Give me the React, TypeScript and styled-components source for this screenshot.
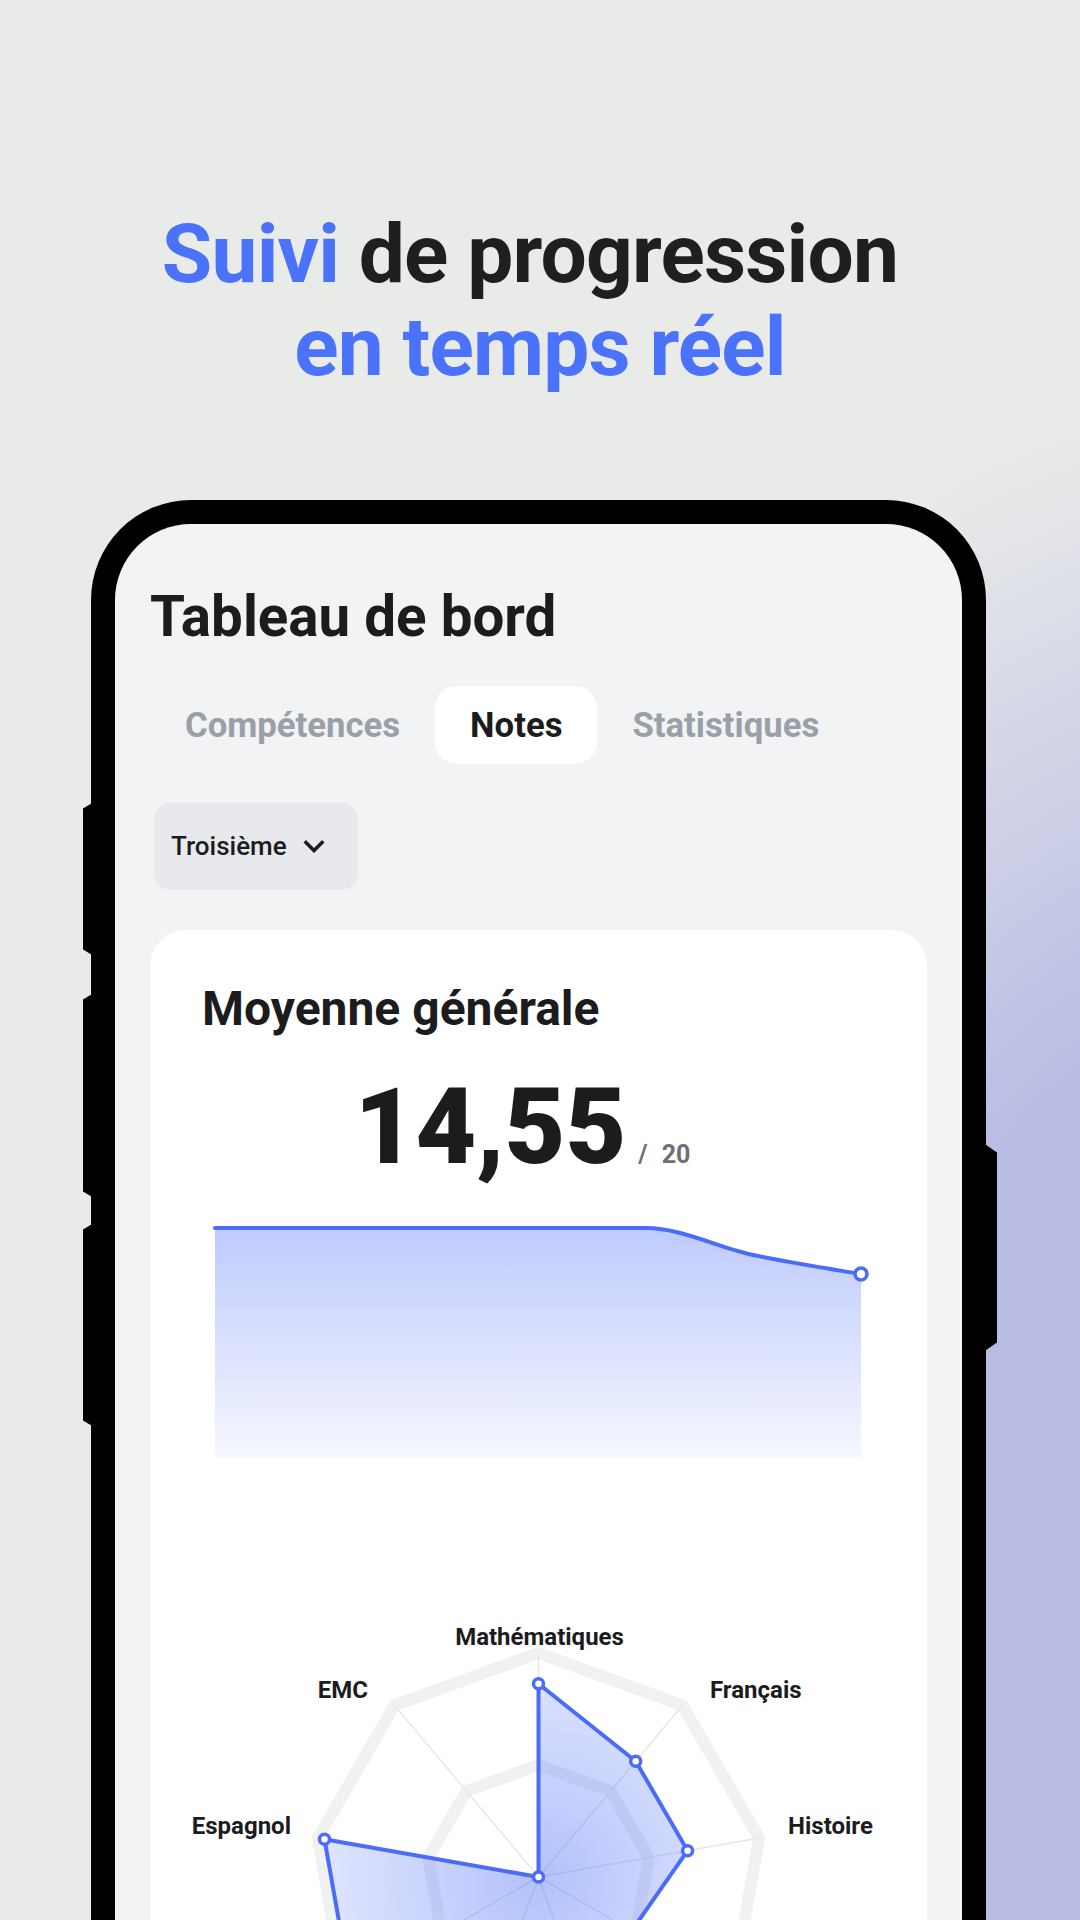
import React from "react";
import styled, { createGlobalStyle } from "styled-components";

const GlobalStyle = createGlobalStyle`
  html, body { margin: 0; padding: 0; }
  body {
    width: 1080px;
    height: 1920px;
    overflow: hidden;
    font-family: Roboto, "Noto Sans", "Liberation Sans", sans-serif;
    -webkit-font-smoothing: antialiased;
  }
  #root { width: 1080px; height: 1920px; }
`;

const Page = styled.div`
  box-sizing: border-box;
  width: 1080px;
  height: 1920px;
  overflow: hidden;
  padding-top: 207.5px;
  display: flex;
  flex-direction: column;
  background-color: #e9ebe9;
  background-image: radial-gradient(
    ellipse 950px 1350px at 1250px 1550px,
    #b7bbe3 0%,
    #b9bde4 40%,
    rgba(233, 235, 233, 0) 85%
  );
  & > * { flex-shrink: 0; }
`;

const Hero = styled.h1`
  margin: 0;
  font-family: Roboto, "Noto Sans", sans-serif;
  font-weight: 700;
  font-size: 82px;
  line-height: 93px;
  letter-spacing: -0.8px;
  color: #1f1f1f;
  text-align: center;
`;

const HeroLine = styled.span<{ $trail?: boolean }>`
  display: block;
  padding-right: ${(p) => (p.$trail ? "20px" : "0")};
`;

const Accent = styled.span`
  color: #4a72fa;
`;

const PhoneWrap = styled.div`
  position: relative;
  margin-top: 106px;
  margin-left: 91px;
  width: 895px;
`;

const Frame = styled.div`
  box-sizing: border-box;
  width: 100%;
  height: 1500px;
  border: 24px solid #000;
  border-bottom: none;
  border-radius: 100px 100px 0 0;
  background: #f2f3f5;
  overflow: hidden;
  padding: 65px 35px 0;
  display: flex;
  flex-direction: column;
  align-items: flex-start;
  & > * { flex-shrink: 0; }
`;

const SideButton = styled.div<{ $side: "left" | "right"; $top: number; $height: number }>`
  position: absolute;
  top: ${(p) => p.$top}px;
  height: ${(p) => p.$height}px;
  background: #000;
  ${(p) =>
    p.$side === "left"
      ? `left: -8px; width: 10px; clip-path: polygon(100% 0, 0 6px, 0 calc(100% - 6px), 100% 100%);`
      : `right: -11px; width: 13px; clip-path: polygon(0 0, 100% 9px, 100% calc(100% - 9px), 0 100%);`}
`;

const ScreenTitle = styled.h2`
  margin: 0;
  font-size: 56.5px;
  line-height: 57px;
  font-weight: 700;
  color: #1c1c1e;
`;

const Tabs = styled.div`
  display: flex;
  margin-top: 40px;
`;

const Tab = styled.div<{ $active?: boolean }>`
  padding: 18px 35px;
  font-size: 34.7px;
  line-height: 42px;
  font-weight: 700;
  border-radius: 22px;
  color: ${(p) => (p.$active ? "#1c1c1e" : "#9aa0a8")};
  background: ${(p) => (p.$active ? "#ffffff" : "transparent")};
`;

const Dropdown = styled.div`
  box-sizing: border-box;
  margin-top: 39px;
  margin-left: 4px;
  height: 87px;
  padding: 0 23px 0 17px;
  display: flex;
  align-items: center;
  gap: 6px;
  background: #e8e9ec;
  border-radius: 16px;
  font-size: 26px;
  font-weight: 500;
  color: #1c1c1e;
`;

const Card = styled.div`
  box-sizing: border-box;
  align-self: stretch;
  margin-top: 40px;
  flex: 1 0 auto;
  background: #ffffff;
  border-radius: 36px 36px 0 0;
  padding-top: 50px;
  display: flex;
  flex-direction: column;
  & > * { flex-shrink: 0; }
`;

const CardTitle = styled.h3`
  margin: 0;
  padding-left: 52px;
  font-size: 48px;
  line-height: 58px;
  font-weight: 700;
  color: #1c1c1e;
`;

const ScoreRow = styled.div`
  margin-top: 38px;
  display: flex;
  justify-content: center;
  align-items: baseline;
  gap: 12px;
  padding-right: 32px;
`;

const BigScore = styled.span`
  font-size: 105px;
  line-height: 104px;
  font-weight: 900;
  color: #1c1c1e;
`;

const ScoreMax = styled.span`
  font-size: 25px;
  font-weight: 700;
  word-spacing: 8px;
  color: #6e6e73;
`;

const ChartSvg = styled.svg`
  display: block;
  margin-top: 21px;
`;

const RadarSvg = styled.svg`
  display: block;
  margin-top: 30px;
`;

const AxisLabel = styled.text`
  font-family: Roboto, "Noto Sans", sans-serif;
  font-size: 24px;
  font-weight: 700;
  fill: #1c1c1e;
`;

const BLUE = "#4a6cf7";

const Chevron = () => (
  <svg width="42" height="42" viewBox="0 0 24 24" aria-hidden="true">
    <path d="M7.41 8.59 12 13.17l4.59-4.58L18 10l-6 6-6-6 1.41-1.41z" fill="#1c1c1e" />
  </svg>
);

const LineChart = () => {
  const line =
    "M65,27 L495.7,27 C531.6,27 567.4,46.3 603.3,54 C639.2,61.7 675.1,67.1 711,73";
  return (
    <ChartSvg width={777} height={270} viewBox="0 0 777 270">
      <defs>
        <linearGradient id="areaFill" x1="0" y1="27" x2="0" y2="257" gradientUnits="userSpaceOnUse">
          <stop offset="0" stopColor={BLUE} stopOpacity="0.36" />
          <stop offset="1" stopColor={BLUE} stopOpacity="0.05" />
        </linearGradient>
      </defs>
      <path d={`${line} L711,257 L65,257 Z`} fill="url(#areaFill)" />
      <path d={line} fill="none" stroke={BLUE} strokeWidth="4" strokeLinecap="round" />
      <circle cx="711" cy="73" r="6" fill="#fff" stroke={BLUE} strokeWidth="3.5" />
    </ChartSvg>
  );
};

const CX = 388.5;
const CY = 376;
const R = 224;
const AXES = 9;
const values = [0.863, 0.675, 0.676, 0.48, 0.55, 0.55, 0.97, 0.97, 0];

const pt = (i: number, r: number) => {
  const a = (i * 2 * Math.PI) / AXES;
  return [CX + r * Math.sin(a), CY - r * Math.cos(a)];
};

const ring = (r: number) =>
  Array.from({ length: AXES }, (_, i) => pt(i, r).map((v) => v.toFixed(1)).join(",")).join(" ");

const labels: { text: string; x: number; y: number; anchor: "start" | "middle" | "end" }[] = [
  { text: "Mathématiques", x: 389.5, y: 144, anchor: "middle" },
  { text: "Français", x: 560, y: 197, anchor: "start" },
  { text: "Histoire", x: 638, y: 333, anchor: "start" },
  { text: "Espagnol", x: 141, y: 333, anchor: "end" },
  { text: "EMC", x: 218, y: 197, anchor: "end" },
];

const Radar = () => {
  const dataPts = values.map((v, i) => pt(i, v * R));
  const dataStr = dataPts.map((p) => p.map((v) => v.toFixed(1)).join(",")).join(" ");
  return (
    <RadarSvg width={777} height={560} viewBox="0 0 777 560">
      <defs>
        <radialGradient id="radarFill" cx={CX} cy={CY} r={R} gradientUnits="userSpaceOnUse">
          <stop offset="0" stopColor={BLUE} stopOpacity="0.42" />
          <stop offset="1" stopColor={BLUE} stopOpacity="0.17" />
        </radialGradient>
      </defs>
      <polygon points={ring(R)} fill="none" stroke="#f0f1f3" strokeWidth="12" />
      <polygon points={ring(R / 2)} fill="none" stroke="#f0f1f3" strokeWidth="12" />
      {Array.from({ length: AXES }, (_, i) => {
        const [x, y] = pt(i, R);
        return <line key={i} x1={CX} y1={CY} x2={x} y2={y} stroke="#e6e7ea" strokeWidth="1.5" />;
      })}
      <polygon points={dataStr} fill="url(#radarFill)" stroke={BLUE} strokeWidth="4" strokeLinejoin="round" />
      {dataPts.map(([x, y], i) => (
        <circle key={i} cx={x} cy={y} r="5" fill="#fff" stroke={BLUE} strokeWidth="3.5" />
      ))}
      {labels.map((l) => (
        <AxisLabel key={l.text} x={l.x} y={l.y} textAnchor={l.anchor}>
          {l.text}
        </AxisLabel>
      ))}
    </RadarSvg>
  );
};

export default function App() {
  return (
    <>
      <GlobalStyle />
      <Page>
        <Hero>
          <HeroLine $trail>
            <Accent>Suivi</Accent> de progression
          </HeroLine>
          <HeroLine>
            <Accent>en temps réel</Accent>
          </HeroLine>
        </Hero>
        <PhoneWrap>
          <SideButton $side="left" $top={303} $height={153} />
          <SideButton $side="left" $top={494} $height={204} />
          <SideButton $side="left" $top={724} $height={203} />
          <SideButton $side="right" $top={644} $height={208} />
          <Frame>
            <ScreenTitle>Tableau de bord</ScreenTitle>
            <Tabs>
              <Tab>Compétences</Tab>
              <Tab $active>Notes</Tab>
              <Tab>Statistiques</Tab>
            </Tabs>
            <Dropdown>
              <span>Troisième</span>
              <Chevron />
            </Dropdown>
            <Card>
              <CardTitle>Moyenne générale</CardTitle>
              <ScoreRow>
                <BigScore>14,55</BigScore>
                <ScoreMax>/ 20</ScoreMax>
              </ScoreRow>
              <LineChart />
              <Radar />
            </Card>
          </Frame>
        </PhoneWrap>
      </Page>
    </>
  );
}
